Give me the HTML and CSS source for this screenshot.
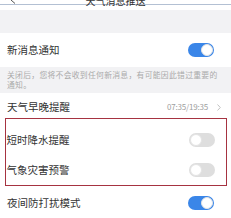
FILE: index.html
```html
<!DOCTYPE html>
<html lang="zh-CN">
<head>
<meta charset="utf-8">
<title>天气消息推送</title>
<link rel="stylesheet" href="styles.css">
</head>
<body>
<div class="page">
  <div class="header">
    <svg class="back" width="6" height="5" viewBox="0 0 6 5"><path d="M1 0 L5 3.5" stroke="#555" stroke-width="1" fill="none"/></svg>
    <div class="title">天气消息推送</div>
  </div>
  <div class="gap"></div>
  <div class="band"></div>
  <div class="row">
    <span>新消息通知</span>
    <span class="switch on"><span class="knob"></span></span>
  </div>
  <div class="note">关闭后，您将不会收到任何新消息，有可能因此错过重要的通知。</div>
  <div class="row row-time">
    <span>天气早晚提醒</span>
    <span class="right">
      <span class="time">07:35/19:35</span>
      <svg class="chev" width="4" height="7" viewBox="0 0 4 7"><path d="M0.5 0.5 L3.3 3.5 L0.5 6.5" stroke="#bbb" stroke-width="0.9" fill="none"/></svg>
    </span>
  </div>
  <div class="mark">
    <div class="row row-in">
      <span>短时降水提醒</span>
      <span class="switch off"><span class="knob"></span></span>
    </div>
    <div class="row row-in">
      <span>气象灾害预警</span>
      <span class="switch off"><span class="knob"></span></span>
    </div>
  </div>
  <div class="row">
    <span>夜间防打扰模式</span>
    <span class="switch on"><span class="knob"></span></span>
  </div>
</div>
</body>
</html>
```
FILE: styles.css
```css
html, body {
  margin: 0;
  padding: 0;
  background: #fff;
}
body {
  font-family: "Noto Sans CJK SC", "Noto Sans", sans-serif;
  color: #333;
}
.page {
  width: 231px;
  height: 218px;
  overflow: hidden;
}
.header {
  height: 4px;
  border-bottom: 1px solid #b3c0d3;
  display: flex;
  align-items: flex-start;
}
.back {
  margin-left: 10px;
  flex: none;
}
.title {
  flex: 1;
  margin-right: 16px;
  margin-top: -4px;
  text-align: center;
  font-size: 10px;
  line-height: 10px;
  color: #333;
}
.gap {
  height: 5px;
}
.band {
  height: 23px;
  background: #f2f2f4;
}
.row {
  box-sizing: border-box;
  height: 34px;
  display: flex;
  align-items: center;
  justify-content: space-between;
  padding: 0 17px 0 7px;
  background: #fff;
  font-size: 10.5px;
  line-height: 12px;
  color: #333;
}
.note {
  box-sizing: border-box;
  height: 26px;
  background: #f2f2f4;
  padding: 3px 7px 3px 7px;
  font-size: 7.8px;
  line-height: 10px;
  letter-spacing: 0.3px;
  color: #aaa;
}
.row-time {
  height: 25px;
  padding-top: 3px;
  padding-right: 10px;
}
.right {
  display: flex;
  align-items: center;
  gap: 9px;
}
.time {
  font-size: 8px;
  color: #a0a0a0;
  letter-spacing: -0.2px;
}
.chev {
  display: block;
}
.mark {
  margin: 0 4px 0 5px;
  border: 1.5px solid #a63341;
  padding-top: 6px;
}
.row-in {
  height: 30px;
  padding: 0 11.5px 0 0.5px;
}
.switch {
  box-sizing: border-box;
  width: 26px;
  height: 14px;
  border-radius: 7px;
  padding: 1px;
  display: flex;
  align-items: center;
}
.switch.on {
  background: #3a86e8;
  justify-content: flex-end;
}
.switch.off {
  background: #dedede;
  justify-content: flex-start;
}
.knob {
  box-sizing: border-box;
  width: 12px;
  height: 12px;
  border-radius: 50%;
  background: #fff;
  border: 0.5px solid #e4e4e4;
}
```
